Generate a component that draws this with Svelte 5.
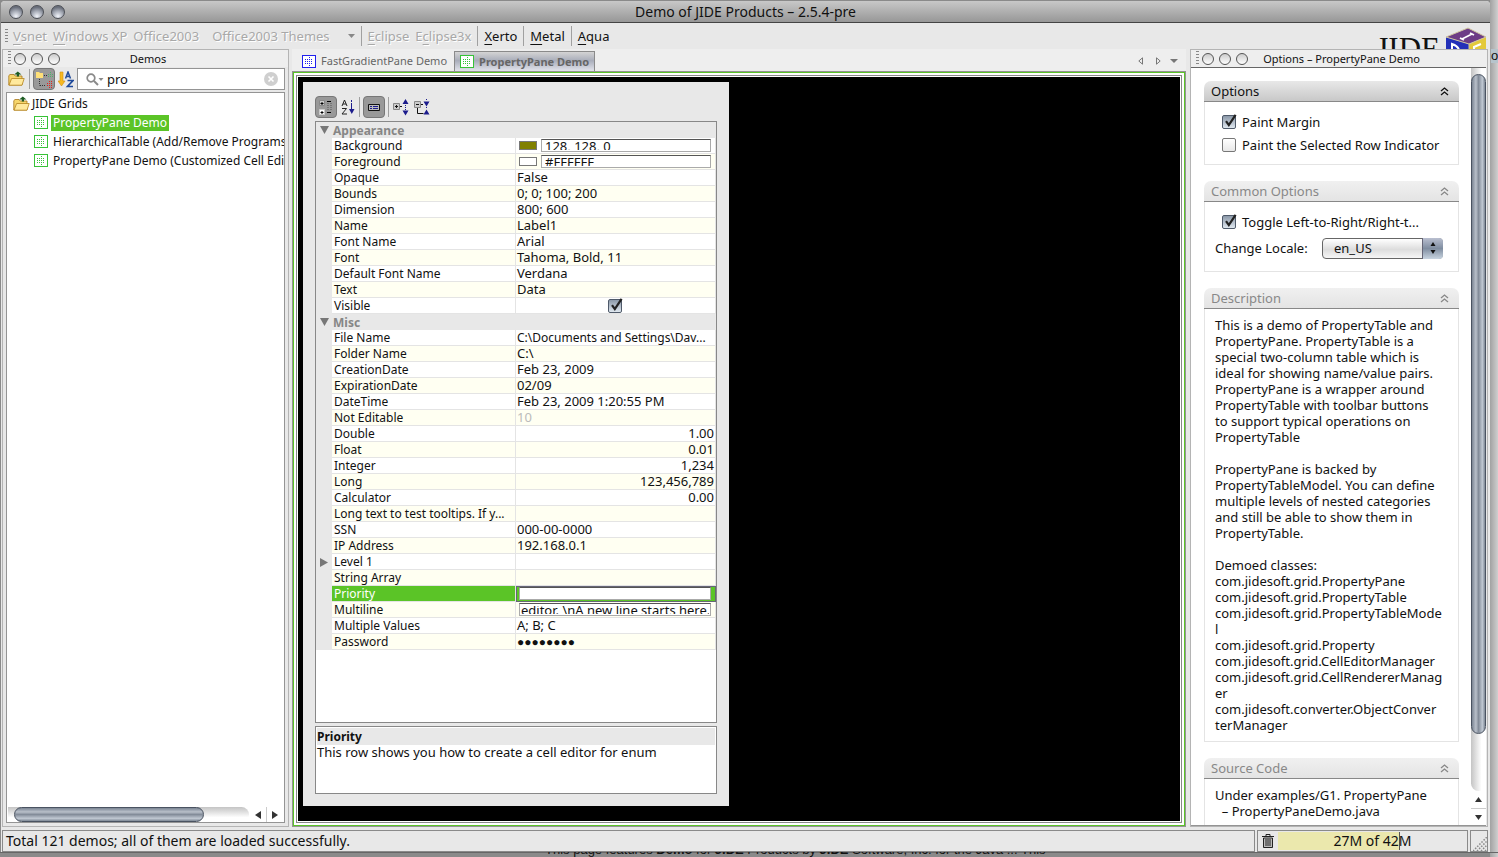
<script lang="ts">
	type Row = {
		name: string;
		value?: string;
		kind?: 'group' | 'color' | 'ticked' | 'number' | 'muted' | 'select' | 'edit' | 'branch' | 'small';
		swatch?: string;
	};

	const rows: Row[] = [
		{ name: 'Appearance', kind: 'group' },
		{ name: 'Background', value: '128, 128, 0', kind: 'color', swatch: '#808000' },
		{ name: 'Foreground', value: '#FFFFFF', kind: 'color', swatch: '#ffffff' },
		{ name: 'Opaque', value: 'False' },
		{ name: 'Bounds', value: '0; 0; 100; 200' },
		{ name: 'Dimension', value: '800; 600' },
		{ name: 'Name', value: 'Label1' },
		{ name: 'Font Name', value: 'Arial' },
		{ name: 'Font', value: 'Tahoma, Bold, 11' },
		{ name: 'Default Font Name', value: 'Verdana' },
		{ name: 'Text', value: 'Data' },
		{ name: 'Visible', kind: 'ticked' },
		{ name: 'Misc', kind: 'group' },
		{ name: 'File Name', value: 'C:\\Documents and Settings\\Dav...', kind: 'small' },
		{ name: 'Folder Name', value: 'C:\\' },
		{ name: 'CreationDate', value: 'Feb 23, 2009' },
		{ name: 'ExpirationDate', value: '02/09' },
		{ name: 'DateTime', value: 'Feb 23, 2009 1:20:55 PM' },
		{ name: 'Not Editable', value: '10', kind: 'muted' },
		{ name: 'Double', value: '1.00', kind: 'number' },
		{ name: 'Float', value: '0.01', kind: 'number' },
		{ name: 'Integer', value: '1,234', kind: 'number' },
		{ name: 'Long', value: '123,456,789', kind: 'number' },
		{ name: 'Calculator', value: '0.00', kind: 'number' },
		{ name: 'Long text to test tooltips. If y...' },
		{ name: 'SSN', value: '000-00-0000' },
		{ name: 'IP Address', value: '192.168.0.1' },
		{ name: 'Level 1', kind: 'branch' },
		{ name: 'String Array' },
		{ name: 'Priority', value: '', kind: 'select' },
		{ name: 'Multiline', value: 'editor. \\nA new line starts here.', kind: 'edit' },
		{ name: 'Multiple Values', value: 'A; B; C' },
		{ name: 'Password', value: '●●●●●●●●', kind: 'small' }
	];

	const demos = [
		'PropertyPane Demo',
		'HierarchicalTable (Add/Remove Programs)',
		'PropertyPane Demo (Customized Cell Editor)'
	];
	let selected = $state(0);
	let query = $state('pro');

	const description = [
		'This is a demo of PropertyTable and',
		'PropertyPane. PropertyTable is a',
		'special two-column table which is',
		'ideal for showing name/value pairs.',
		'PropertyPane is a wrapper around',
		'PropertyTable with toolbar buttons',
		'to support typical operations on',
		'PropertyTable',
		'',
		'PropertyPane is backed by',
		'PropertyTableModel. You can define',
		'multiple levels of nested categories',
		'and still be able to show them in',
		'PropertyTable.',
		'',
		'Demoed classes:',
		'com.jidesoft.grid.PropertyPane',
		'com.jidesoft.grid.PropertyTable',
		'com.jidesoft.grid.PropertyTableMode',
		'l',
		'com.jidesoft.grid.Property',
		'com.jidesoft.grid.CellEditorManager',
		'com.jidesoft.grid.CellRendererManag',
		'er',
		'com.jidesoft.converter.ObjectConver',
		'terManager'
	].join('\n');
</script>

{#snippet gridIcon(color: string)}
	<svg width="14" height="13" viewBox="0 0 14 13" aria-hidden="true">
		<rect x="0.5" y="0.5" width="13" height="12" fill="#fff" stroke={color} />
		<path
			d="M3 4.5h8M3 6.5h8M3 8.5h8"
			stroke={color}
			stroke-dasharray="1 1"
			fill="none"
		/>
		<path d="M7 2h1v1h-1zM7 10h1v1h-1z" fill={color} />
	</svg>
{/snippet}

{#snippet folderIcon()}
	<svg width="17" height="16" viewBox="0 0 17 16" aria-hidden="true">
		<path d="M.8 14V4.6L2 3.5h4l1.2 1.5H14V14z" fill="#f6d66c" stroke="#a8761a" stroke-width=".8" />
		<path d="M1 14.2 3.6 7.5h12.6L14 14.2z" fill="#ffe99d" stroke="#b58420" stroke-width=".8" />
		<path d="M8.8 5.5V3.6H6.2L9.8.4l3.6 3.2H11v1.9z" fill="#1d5c22" />
	</svg>
{/snippet}

{#snippet lights()}
	<span class="lights"><i></i><i></i><i></i></span>
{/snippet}

{#snippet check(id: string, on: boolean, label: string)}
	<span class="check">
		<input {id} type="checkbox" checked={on} aria-label={label} />
		<svg width="17" height="17" viewBox="0 0 17 17" aria-hidden="true">
			<path d="M4 8.2 6.8 12 13.6 1.8" fill="none" stroke="#222" stroke-width="2.2" />
		</svg>
	</span>
{/snippet}

{#snippet groupHead(title: string, active: boolean)}
	<button class="group-head" class:active>
		<span>{title}</span>
		<svg width="9" height="9" viewBox="0 0 9 9" aria-hidden="true">
			<path
				d="M1 4 4.5 1 8 4M1 8 4.5 5 8 8"
				fill="none"
				stroke="currentColor"
				stroke-width="1.3"
			/>
		</svg>
	</button>
{/snippet}

<div class="desktop">
	<div class="window">
		<header class="titlebar">
			<span class="orbs"><i></i><i></i><i></i></span>
			<h1>Demo of JIDE Products – 2.5.4-pre</h1>
		</header>

		<nav class="styles">
			<span class="grip"></span>
			<button disabled><u>V</u>snet</button>
			<button disabled><u>W</u>indows XP</button>
			<button disabled>Office2003</button>
			<button disabled class="themes">
				Office2003 Themes
				<svg width="7" height="4" viewBox="0 0 7 4"><path d="M0 0h7L3.5 4z" fill="#888" /></svg>
			</button>
			<span class="sep"></span>
			<button disabled><u>E</u>clipse</button>
			<button disabled>E<u>c</u>lipse3x</button>
			<span class="sep"></span>
			<button><u>X</u>erto</button>
			<span class="sep"></span>
			<button><u>M</u>etal</button>
			<span class="sep"></span>
			<button><u>A</u>qua</button>
			<div class="brand">
				<span>JIDE</span>
				<svg width="42" height="44" viewBox="0 0 42 44" aria-hidden="true">
					<path d="M1 10 23 1l18 9-17 7z" fill="#6d3c86" />
					<path d="M1 10l23 7v25L1 33z" fill="#2330b8" />
					<path d="M41 10 24 17v25l17-9z" fill="#e3c93a" />
					<path d="M1 10 23 1l18 9M1 10l23 7 17-7M24 17v25" fill="none" stroke="#cfc6a0" />
					<path d="m17 12 10-5M15 11l4 2M25 6l4 2" stroke="#fff" stroke-width="1.8" />
					<path d="M7 17v10l4 1q4-1 3-5t-7-6z" fill="none" stroke="#fff" stroke-width="2" />
					<path d="m36 17-7 3v10l7-4M29 25l5-2" fill="none" stroke="#fff" stroke-width="2" />
				</svg>
			</div>
		</nav>

		<main>
			<section class="panel demos">
				<header class="panel-head">
					<span class="grip"></span>
					{@render lights()}
					<h2>Demos</h2>
				</header>
				<div class="finder">
					<button aria-label="Expand all">{@render folderIcon()}</button>
					<span class="sep"></span>
					<button class="pressed" aria-label="Show as tree">
						<svg width="20" height="18" viewBox="0 0 20 18" aria-hidden="true">
							<path d="M2 2h3l1 1h3v5H2z" fill="#ffe078" />
							<path
								d="M5.5 9v6.5M6 15.5h6M10 5.5h3"
								stroke="#333"
								stroke-dasharray="1 1"
								fill="none"
							/>
							<path d="M14 4.5h5M14 6.5h5M16 2.5h1" stroke="#4eb36a" stroke-dasharray="1 1" />
							<path
								d="M13 13.5h6M13 15.5h6M15 11.5h3M15 17.5h3"
								stroke="#e2231f"
								stroke-dasharray="1 1"
							/>
						</svg>
					</button>
					<button aria-label="Sort">
						<svg width="16" height="17" viewBox="0 0 16 17" aria-hidden="true">
							<path d="M2 1h3v9h2l-3.5 5L0 10h2z" fill="#f6b921" stroke="#d58e0c" stroke-width=".6" />
							<path d="M7.5 7.5 10 1l2.5 6.5M8.5 5.500h3.5" fill="none" stroke="#1f4a9b" stroke-width="1.5" />
							<path d="M9.5 9.5H15l-5.5 6H15" fill="none" stroke="#1f4a9b" stroke-width="1.7" />
						</svg>
					</button>
					<label class="search">
						<svg width="18" height="13" viewBox="0 0 18 13" aria-hidden="true">
							<circle cx="5" cy="5" r="3.8" fill="none" stroke="#8a8a8a" stroke-width="1.7" />
							<path d="m8 8 4 4" stroke="#8a8a8a" stroke-width="2" />
							<path d="M12.5 5h5L15 8z" fill="#8a8a8a" />
						</svg>
						<input bind:value={query} aria-label="Search demos" />
						<button aria-label="Clear" onclick={() => (query = '')}>
							<svg width="14" height="14" viewBox="0 0 14 14" aria-hidden="true">
								<circle cx="7" cy="7" r="7" fill="#cfcfcf" />
								<path d="m4.5 4.5 5 5m0-5-5 5" stroke="#fff" stroke-width="1.6" />
							</svg>
						</button>
					</label>
				</div>
				<div class="tree">
					<ul>
						<li class="root">{@render folderIcon()}<span>JIDE Grids</span></li>
						{#each demos as demo, i}
							<li>
								{@render gridIcon('#37c337')}
								<button class:selected={selected === i} onclick={() => (selected = i)}>{demo}</button>
							</li>
						{/each}
					</ul>
					<div class="hscroll">
						<span class="track"><span class="thumb"></span></span>
						<button aria-label="Scroll left">
							<svg width="6" height="8" viewBox="0 0 6 8"><path d="M6 0v8L0 4z" fill="#333" /></svg>
						</button>
						<button aria-label="Scroll right">
							<svg width="6" height="8" viewBox="0 0 6 8"><path d="M0 0v8l6-4z" fill="#333" /></svg>
						</button>
					</div>
				</div>
			</section>

			<section class="center">
				<div class="tabs">
					<button class="tab">{@render gridIcon('#2020ee')}FastGradientPane Demo</button>
					<button class="tab current">{@render gridIcon('#37c337')}PropertyPane Demo</button>
					<span class="tab-nav">
						<svg width="5" height="8" viewBox="0 0 5 8"><path d="M4.5.8v6.4L.8 4z" fill="none" stroke="#777" /></svg>
						<svg width="5" height="8" viewBox="0 0 5 8"><path d="M.5.8v6.4L4.2 4z" fill="none" stroke="#777" /></svg>
						<svg width="8" height="4" viewBox="0 0 8 4"><path d="M0 0h8L4 4z" fill="#777" /></svg>
					</span>
				</div>
				<div class="frame">
					<div class="canvas">
						<div class="sheet">
							<div class="tools">
								<button class="pressed" aria-label="Categorized">
									<svg width="16" height="16" viewBox="0 0 16 16" aria-hidden="true">
										<path d="M1.5 1.5h5v5h-5z" fill="#ccc" stroke="#888" />
										<path d="M1.5 10.5h5v5h-5z" fill="#fff" stroke="#ccc" />
										<path
											d="M2.5 4.5h3M4 3v3M2.5 13.5h3M4 12v3M9 2.5h4M9 13.5h4"
											stroke="#000"
										/>
										<path
											d="M9 4.5h6M9 6.500h6M9 8.5h6M9 10.5h6"
											stroke="#777"
											stroke-dasharray="2 1"
										/>
									</svg>
								</button>
								<button aria-label="Alphabetic">
									<svg width="14" height="16" viewBox="0 0 14 16" aria-hidden="true">
										<path d="M1 7 3.5 1 6 7M2 5h3M1 9.5h4.5L1 15h5" fill="none" stroke="#222" />
										<path d="M10.5 1v2M10.5 4v6" stroke="#1c1c8c" />
										<path d="M8 10h5.5l-2.7 5z" fill="#1c1c8c" />
									</svg>
								</button>
								<span class="sep"></span>
								<button class="pressed" aria-label="Show description">
									<svg width="14" height="10" viewBox="0 0 14 10" aria-hidden="true">
										<path d="M1.5 2.5h11v6h-11z" fill="#bbb" stroke="#111" />
										<path d="M3 4.5h2M6 4.5h5M3 6.5h2M6 6.5h5" stroke="#1c1c8c" />
									</svg>
								</button>
								<span class="sep"></span>
								<button aria-label="Expand">
									<svg width="16" height="17" viewBox="0 0 16 17" aria-hidden="true">
										<path d="M.5 4.5h6v6h-6z" fill="#ccc" stroke="#888" />
										<path d="M2 7.5h3M3.5 6v3M7 7.5h2" stroke="#111" />
										<path d="M12.5 0 15.5 5h-6zM9.5 11.5h6l-3 5z" fill="#1c1c8c" />
										<path d="M12.5 6v1M12.5 8v1M12.5 10v1" stroke="#1c1c8c" />
									</svg>
								</button>
								<button aria-label="Collapse">
									<svg width="16" height="17" viewBox="0 0 16 17" aria-hidden="true">
										<path d="M.5 2.5h6v6h-6z" fill="#ccc" stroke="#888" />
										<path d="M2 5.5h3M7 5.5h2M3.5 9v5.5h6" stroke="#111" fill="none" />
										<path d="M9.5 2.5h6l-3 5zM12.500 10.5l3 5h-6z" fill="#1c1c8c" />
										<path d="M12.5 0v1M12.5 8v1" stroke="#1c1c8c" />
									</svg>
								</button>
							</div>

							<div class="grid-box">
								<table>
									<colgroup><col class="gutter" /><col class="names" /><col /></colgroup>
									<tbody>
										{#each rows as row, i}
											{#if row.kind === 'group'}
												<tr class="group">
													<td><svg width="9" height="8" viewBox="0 0 9 8"><path d="M0 0h9L4.5 8z" fill="#777" /></svg></td>
													<th colspan="2">{row.name}</th>
												</tr>
											{:else}
												<tr class:cream={i % 2 === 0} class:picked={row.kind === 'select'}>
													<td>
														{#if row.kind === 'branch'}
															<svg width="8" height="9" viewBox="0 0 8 9"><path d="M0 0v9l8-4.5z" fill="#777" /></svg>
														{/if}
													</td>
													<td class="name">{row.name}</td>
													<td class="value {row.kind ?? ''}">
														{#if row.kind === 'color'}
															<div class="cell">
																<span class="swatch" style:background={row.swatch}></span>
																<span class="field"><input value={row.value} aria-label={row.name} /></span>
															</div>
														{:else if row.kind === 'ticked'}
															<div class="cell">{@render check('visible', true, row.name)}</div>
														{:else if row.kind === 'select' || row.kind === 'edit'}
															<div class="cell">
																<span class="field"><input value={row.value} aria-label={row.name} /></span>
															</div>
														{:else}
															{row.value ?? ''}
														{/if}
													</td>
												</tr>
											{/if}
										{/each}
									</tbody>
								</table>
							</div>

							<div class="hint">
								<h3>Priority</h3>
								<p>This row shows you how to create a cell editor for enum</p>
							</div>
						</div>
					</div>
				</div>
			</section>

			<section class="panel options">
				<header class="panel-head">
					<span class="grip"></span>
					{@render lights()}
					<h2>Options – PropertyPane Demo</h2>
				</header>
				<div class="options-body">
					<div class="groups">
						<div class="group-box">
							{@render groupHead('Options', true)}
							<div class="group-body ticks">
								<label for="margin">{@render check('margin', true, 'Paint Margin')}Paint Margin</label>
								<label for="indicator">
									{@render check('indicator', false, 'Paint the Selected Row Indicator')}Paint the Selected Row Indicator
								</label>
							</div>
						</div>
						<div class="group-box">
							{@render groupHead('Common Options', false)}
							<div class="group-body ticks">
								<label for="toggle">
									{@render check('toggle', true, 'Toggle direction')}Toggle Left-to-Right/Right-t...
								</label>
								<div class="locale">
									<label for="locale">Change Locale:</label>
									<span class="picker">
										<select id="locale"><option>en_US</option></select>
										<svg width="20" height="21" viewBox="0 0 20 21" aria-hidden="true">
											<path d="m10 4 2.5 4h-5zM10 16l2.5-4h-5z" fill="#111" />
										</svg>
									</span>
								</div>
							</div>
						</div>
						<div class="group-box">
							{@render groupHead('Description', false)}
							<p class="group-body text">{description}</p>
						</div>
						<div class="group-box">
							{@render groupHead('Source Code', false)}
							<p class="group-body text">{'Under examples/G1. PropertyPane\n  – PropertyPaneDemo.java'}</p>
						</div>
					</div>
					<div class="vscroll">
						<span class="track"><span class="thumb"></span></span>
						<button aria-label="Scroll up">
							<svg width="7" height="5" viewBox="0 0 7 5"><path d="M0 5h7L3.5 0z" fill="#333" /></svg>
						</button>
						<button aria-label="Scroll down">
							<svg width="7" height="5" viewBox="0 0 7 5"><path d="M0 0h7L3.5 5z" fill="#333" /></svg>
						</button>
					</div>
				</div>
			</section>
		</main>

		<footer>
			<span class="status">Total 121 demos; all of them are loaded successfully.</span>
			<span class="memory">
				<svg width="12" height="14" viewBox="0 0 12 14" aria-hidden="true">
					<path d="M0 2.5h12M4 2V.5h4V2" fill="none" stroke="#222" />
					<path d="M1.5 4h9v9.5h-9z" fill="#bbb" stroke="#222" />
					<path d="M4 5v7M6 5v7M8 5v7" stroke="#222" />
				</svg>
				<span class="meter"><span class="used"></span><b>27M of 42M</b></span>
			</span>
			<span class="resize">
				<svg width="14" height="14" viewBox="0 0 14 14" aria-hidden="true">
					<path
						d="M0 14 14 0M4 14 14 4M8 14l6-6M12 14l2-2"
						stroke="#888"
						stroke-width="1.5"
						stroke-dasharray="1.5 1.5"
					/>
				</svg>
			</span>
		</footer>
	</div>
	<span class="behind-right">on</span>
	<div class="behind">
		<span>
			This page features <b>Demo</b> for <b>JIDE</b> Products by <b>JIDE</b> Software, Inc. for the Java ... This
		</span>
	</div>
</div>

<style>
	:global(body) {
		margin: 0;
		background: #9c9c9c;
	}

	.desktop {
		--line: #949494;
		--face: #e8e8e8;
		--green: #5bc427;
		position: relative;
		box-sizing: border-box;
		height: 100vh;
		padding: 1px 8px 5px 1px;
		overflow: hidden;
		background: linear-gradient(90deg, #8a8a8a 0, #8a8a8a calc(100% - 8px), #a2a2a2 calc(100% - 8px), #cfcfcf);
		color: #111;
		font: 12px/16px 'Noto Sans', 'Open Sans', sans-serif;
	}

	.desktop :is(h1, h2, h3, p, ul) {
		margin: 0;
		padding: 0;
		font-size: inherit;
		font-weight: normal;
	}

	.desktop :is(button, input, select) {
		box-sizing: border-box;
		margin: 0;
		padding: 0;
		border: 0;
		border-radius: 0;
		background: none;
		color: inherit;
		font: inherit;
	}

	.desktop svg {
		display: block;
		flex: none;
	}

	.window {
		display: flex;
		flex-direction: column;
		height: 100%;
		background: var(--face);
		border-radius: 4px 4px 0 0;
		overflow: hidden;
	}

	.titlebar {
		display: flex;
		align-items: center;
		height: 21px;
		border-bottom: 1px solid #444;
		background: linear-gradient(#c8c8c8, #979797);
		font-size: 14px;
	}

	.orbs {
		display: flex;
		gap: 7px;
		width: 0;
		padding-left: 8px;
	}

	.orbs i {
		flex: none;
		box-sizing: border-box;
		width: 14px;
		height: 14px;
		border: 1px solid #4c4f56;
		border-radius: 50%;
		background: radial-gradient(circle at 50% 85%, #f2f5fb, #a4a9b4 45%, #6b707c 75%);
	}

	.desktop h1 {
		flex: 1;
		padding-right: 8px;
		text-align: center;
	}

	.styles {
		display: flex;
		align-items: center;
		height: 26px;
		padding-left: 4px;
		font-size: 13px;
	}

	.desktop .styles button {
		margin: 0 3px;
	}

	.desktop .styles button:disabled {
		color: #a8a8a8;
		text-shadow: 1px 1px 0 #fff;
	}

	.styles u {
		text-underline-offset: 3px;
	}

	.desktop .styles .themes {
		display: flex;
		align-items: center;
		gap: 18px;
		margin: 0 3px 0 10px;
	}

	.grip {
		flex: none;
		width: 3px;
		height: 15px;
		margin-right: 2px;
		background: repeating-linear-gradient(#888 0 1px, transparent 1px 3px);
	}

	.sep {
		flex: none;
		width: 1px;
		height: 20px;
		margin: 0 3px;
		background: #a0a0a0;
	}

	.brand {
		display: flex;
		align-self: flex-start;
		gap: 5px;
		height: 26px;
		margin-left: auto;
		padding-right: 3px;
		overflow: hidden;
		font: 31px/32px 'Liberation Serif', serif;
	}

	.brand span {
		padding-top: 10px;
	}

	.brand svg {
		margin-top: 4px;
	}

	main {
		display: flex;
		flex: 1;
		gap: 3px;
		min-height: 0;
		padding: 0 2px 0 1px;
	}

	.panel {
		display: flex;
		flex: none;
		flex-direction: column;
		box-sizing: border-box;
		border: 1px solid #b4b4b4;
	}

	.panel-head {
		display: flex;
		align-items: center;
		height: 17px;
		padding-left: 5px;
		background: #eee;
		font-size: 11px;
	}

	.panel .panel-head h2 {
		flex: 1;
		padding-right: 52px;
		text-align: center;
	}

	.lights {
		display: flex;
		gap: 5px;
		padding-left: 1px;
	}

	.lights i {
		box-sizing: border-box;
		width: 12px;
		height: 12px;
		border: 1px solid #555;
		border-radius: 50%;
		background: linear-gradient(#ccc, #fff);
	}

	.demos {
		width: 287px;
	}

	.finder {
		display: flex;
		align-items: center;
		height: 22px;
		margin: 1px 3px 2px 5px;
	}

	.finder .sep {
		margin-left: 4px;
	}

	.pressed {
		display: flex;
		align-items: center;
		justify-content: center;
		width: 22px;
		height: 22px;
	}

	.desktop .pressed {
		border: 1px solid #777;
		border-radius: 4px;
		background: #999;
	}

	.desktop .finder .pressed {
		margin-right: 3px;
	}

	.search {
		display: flex;
		flex: 1;
		align-items: center;
		gap: 3px;
		box-sizing: border-box;
		min-width: 0;
		height: 22px;
		margin-left: 3px;
		padding: 0 6px 0 8px;
		border: 1px solid var(--line);
		background: #fff;
	}

	.desktop .search input {
		flex: 1;
		width: 0;
		outline: 0;
		font-size: 13px;
	}

	.tree {
		display: flex;
		flex: 1;
		flex-direction: column;
		margin: 0 3px 3px;
		border: 1px solid var(--line);
		background: #fff;
		overflow: hidden;
	}

	.desktop .tree ul {
		flex: 1;
		padding: 1px 0 0;
		list-style: none;
	}

	.tree li {
		display: flex;
		align-items: center;
		gap: 3px;
		height: 19px;
		padding-left: 27px;
		white-space: nowrap;
	}

	.tree .root {
		gap: 2px;
		padding-left: 6px;
	}

	.desktop .tree li button {
		padding: 0 2px;
	}

	.desktop .tree li .selected {
		background: var(--green);
		color: #fff;
	}

	.hscroll {
		display: flex;
		height: 15px;
		margin: 0 1px;
		background: #fff;
	}

	.hscroll button,
	.vscroll button {
		display: flex;
		align-items: center;
		justify-content: center;
		width: 17px;
	}

	.desktop .hscroll button + button {
		border-left: 1px solid #ccc;
	}

	.hscroll .track {
		flex: 1;
		border-radius: 0 8px 8px 0;
		background: linear-gradient(#c4c4c4, #fff 70%);
	}

	.hscroll .thumb {
		display: block;
		box-sizing: border-box;
		width: 79%;
		height: 15px;
		margin-left: 6px;
		border: 1px solid #4a5361;
		border-radius: 8px;
		background: linear-gradient(#7b8593, #b9c0ca 30%, #838c99 50%, #c0c8d2 80%, #7d8794);
	}

	.center {
		display: flex;
		flex: 1;
		flex-direction: column;
		min-width: 0;
	}

	.tabs {
		display: flex;
		align-items: flex-end;
		height: 22px;
		background: #eee;
		font-size: 11px;
	}

	.tab {
		display: flex;
		align-items: center;
		gap: 5px;
		height: 20px;
	}

	.desktop .tab {
		padding: 0 7px 0 10px;
		color: #666;
	}

	.desktop .tab.current {
		padding: 0 5px;
		border: 1px solid #8a8a8a;
		border-bottom: 0;
		background: linear-gradient(#d4d4d4, #a9adba 45%, #e2e4ec);
		font-weight: bold;
	}

	.tab-nav {
		display: flex;
		align-items: center;
		gap: 13px;
		height: 20px;
		margin-left: auto;
		padding-right: 8px;
	}

	.tab-nav svg:last-child {
		margin-left: -4px;
	}

	.frame {
		display: flex;
		flex: 1;
		box-sizing: border-box;
		min-height: 0;
		margin: 1px;
		padding: 2px;
		border: 1px solid var(--green);
		outline: 1px solid var(--line);
		background: #fff;
	}

	.canvas {
		flex: 1;
		box-sizing: border-box;
		padding: 6px 6px 16px;
		border: 1px solid #888;
		background: #000;
		box-shadow: inset 0 0 0 1px #fff;
	}

	.sheet {
		display: flex;
		flex-direction: column;
		box-sizing: border-box;
		width: 426px;
		height: 100%;
		padding: 14px 12px 12px;
		background: var(--face);
	}

	.tools {
		display: flex;
		align-items: center;
		gap: 3px;
		height: 22px;
		margin-bottom: 3px;
	}

	.desktop .tools button:not(.pressed) {
		margin: 0 1px;
	}

	.tools .sep {
		margin: 0;
	}

	.grid-box {
		flex: 1;
		min-height: 0;
		border: 1px solid #888;
		background: #fff;
	}

	table {
		width: 100%;
		border-collapse: separate;
		border-spacing: 0;
		table-layout: fixed;
	}

	.gutter {
		width: 16px;
	}

	.names {
		width: 184px;
	}

	td,
	th {
		box-sizing: border-box;
		height: 16px;
		padding: 0;
		line-height: 15px;
		text-align: left;
		white-space: nowrap;
	}

	td:first-child {
		padding-left: 4px;
		background: var(--face);
	}

	.group th {
		padding: 1px 0 0 1px;
		background: var(--face);
		color: #868686;
	}

	.name,
	.value {
		padding: 0 1px 0 2px;
		border: solid #e4e4e4;
		border-width: 0 1px 1px 0;
	}

	.value {
		padding-left: 1px;
		font-size: 13px;
	}

	.cream .name,
	.cream .value {
		background: #fffff2;
	}

	.picked .name {
		background: var(--green);
		color: #fff;
	}

	.picked .value {
		background: var(--green);
		outline: 1px solid #667;
		outline-offset: -1px;
	}

	.number {
		text-align: right;
	}

	.muted {
		color: #bbb;
	}

	.small {
		font-size: 12px;
	}

	.check {
		position: relative;
		display: block;
		width: 14px;
		height: 14px;
	}

	.check input {
		display: block;
		width: 14px;
		height: 14px;
		appearance: none;
	}

	.desktop .check input {
		border: 1px solid #777;
		border-radius: 2px;
		background: linear-gradient(#fff, #e8e8e8);
	}

	.desktop .check input:checked {
		border-color: #4f5a6a;
		background: linear-gradient(#8b98a8, #dfe7ef);
	}

	.check svg {
		position: absolute;
		top: -2px;
		left: 0;
		pointer-events: none;
	}

	.desktop .check input:not(:checked) + svg {
		display: none;
	}

	.cell {
		display: flex;
		align-items: center;
		gap: 4px;
		height: 15px;
		padding: 0 3px 0 2px;
	}

	.ticked .cell {
		justify-content: center;
	}

	.swatch {
		box-sizing: border-box;
		width: 18px;
		height: 9px;
		border: 1px solid #777;
	}

	.field {
		display: flex;
		flex: 1;
		box-sizing: border-box;
		height: 13px;
		padding: 2px 3px;
		border: 1px solid #aaa;
		border-top-color: #555;
		background: #fff;
	}

	.desktop .field input {
		width: 100%;
		height: 8px;
		outline: 0;
	}

	.desktop .edit .field {
		padding: 2px 1px;
	}

	.desktop .edit input {
		text-align: right;
	}

	.hint {
		box-sizing: border-box;
		height: 68px;
		margin-top: 3px;
		padding: 1px;
		border: 1px solid #888;
		background: #fff;
	}

	.desktop .hint h3 {
		padding-top: 1px;
		background: var(--face);
		font-weight: bold;
	}

	.desktop .hint p {
		font-size: 13px;
		line-height: 15px;
	}

	.options {
		width: 298px;
		margin-left: 1px;
	}

	.options-body {
		display: flex;
		flex: 1;
		min-height: 0;
		margin-right: 1px;
		border-top: 1px solid #666;
		border-bottom: 1px solid var(--line);
		background: #fff;
	}

	.groups {
		flex: 1;
		padding: 13px 12px 0 13px;
		overflow: hidden;
		font-size: 13px;
	}

	.group-box {
		margin-bottom: 16px;
	}

	.group-head {
		display: flex;
		align-items: center;
		justify-content: space-between;
		width: 100%;
		height: 21px;
	}

	.desktop .group-head {
		padding: 0 10px 0 7px;
		border-bottom: 1px solid #888;
		border-radius: 7px 7px 0 0;
		background: linear-gradient(#f0f0f0, #e4e4e4);
		color: #888;
	}

	.desktop .group-head.active {
		background: linear-gradient(#e8e8e8, #c8c8c8);
		color: #111;
	}

	.group-body {
		border: 1px solid #e4e4e4;
		border-top: 0;
	}

	.ticks {
		padding: 8px 10px;
	}

	.ticks > label {
		display: flex;
		align-items: center;
		gap: 6px;
		height: 23px;
		padding-left: 7px;
		white-space: nowrap;
	}

	.locale {
		display: flex;
		align-items: center;
		justify-content: space-between;
		height: 30px;
		padding-right: 5px;
	}

	.picker {
		position: relative;
	}

	.picker select {
		display: block;
		width: 121px;
		height: 21px;
		appearance: none;
	}

	.desktop .picker select {
		padding: 0 11px;
		border: 1px solid #666;
		border-radius: 4px;
		background: linear-gradient(#fff, #ddd 55%, #f6f6f6);
	}

	.picker svg {
		position: absolute;
		top: 0;
		right: 0;
		border-left: 1px solid #667;
		border-radius: 0 4px 4px 0;
		background: linear-gradient(#b9bfd0, #7f8da0 50%, #c8d4e0);
		pointer-events: none;
	}

	.desktop .text {
		padding: 8px 10px;
		white-space: pre;
	}

	.vscroll {
		display: flex;
		flex: none;
		flex-direction: column;
		width: 15px;
	}

	.desktop .vscroll button {
		width: 15px;
		height: 17px;
	}

	.desktop .vscroll button + button {
		border-top: 1px solid #ccc;
	}

	.vscroll .track {
		flex: 1;
		padding-top: 6px;
		border-radius: 0 0 8px 8px;
		background: linear-gradient(90deg, #c4c4c4, #fff 70%);
	}

	.vscroll .thumb {
		display: block;
		box-sizing: border-box;
		height: 92%;
		border: 1px solid #4a5361;
		border-radius: 8px;
		background: linear-gradient(90deg, #7b8593, #b9c0ca 30%, #838c99 50%, #c0c8d2 80%, #7d8794);
	}

	footer {
		display: flex;
		gap: 2px;
		height: 22px;
		margin-top: 3px;
		padding: 0 2px 0 1px;
		font-size: 14px;
	}

	footer > span {
		display: flex;
		align-items: center;
		box-sizing: border-box;
		border: 1px solid #8a8a8a;
	}

	.status {
		flex: 1;
		padding-left: 3px;
	}

	.memory {
		gap: 4px;
		width: 211px;
		padding-left: 4px;
	}

	.meter {
		position: relative;
		display: flex;
		flex: 1;
		align-items: center;
		justify-content: center;
		height: 18px;
	}

	.used {
		position: absolute;
		inset: 0 auto 0 0;
		width: 64%;
		border-right: 1px solid #555;
		background: #ebe8ad;
	}

	.meter b {
		position: relative;
		font-weight: normal;
	}

	.resize {
		align-items: flex-end;
		justify-content: flex-end;
		width: 18px;
	}

	.behind,
	.behind-right {
		position: absolute;
		overflow: hidden;
		font: 13px/14px 'Liberation Sans', sans-serif;
		white-space: nowrap;
	}

	.behind {
		right: 0;
		bottom: 0;
		left: 0;
		display: flex;
		align-items: flex-end;
		height: 5px;
		padding-left: 545px;
		box-shadow: inset 0 1px #666;
	}

	.behind-right {
		top: 49px;
		right: 0;
		width: 7px;
		background: #b6c4cc;
	}
</style>
